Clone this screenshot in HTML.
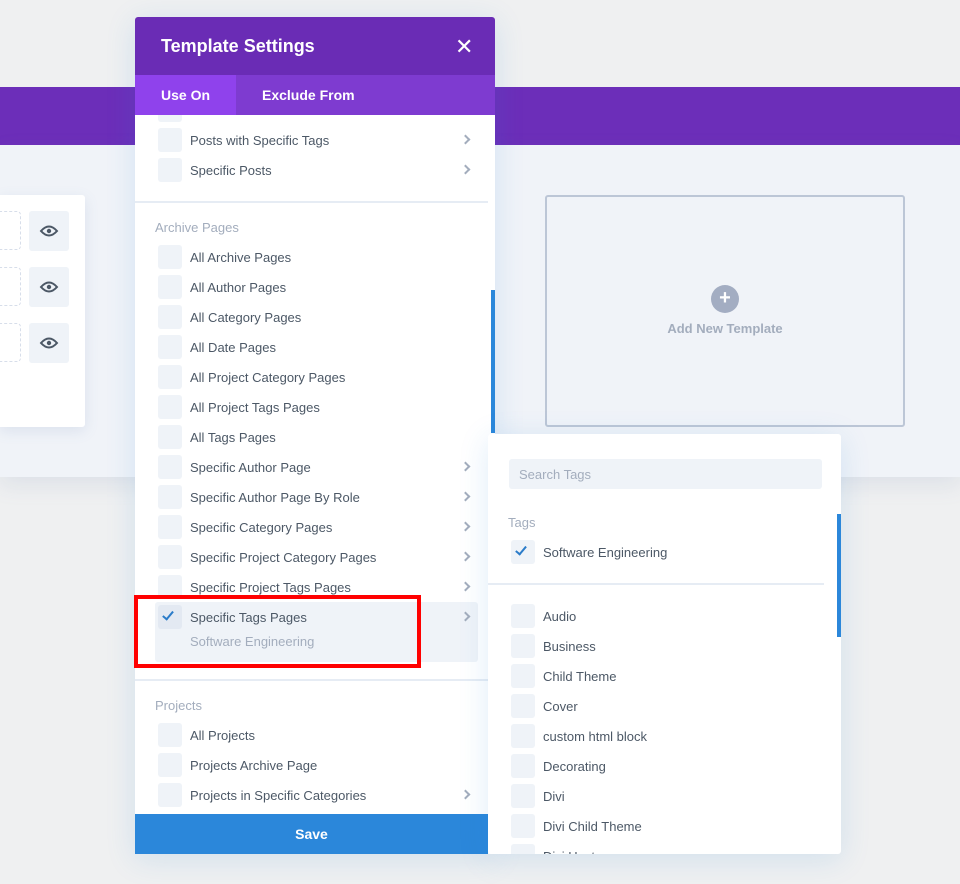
<!DOCTYPE html>
<html><head><meta charset="utf-8"><style>
*{margin:0;padding:0;box-sizing:border-box}
body{width:960px;height:884px;background:#eff0f1;font-family:"Liberation Sans",sans-serif;position:relative;overflow:hidden;color:#4c5866}
.a{position:absolute}
.cb{position:absolute;width:24px;height:24px;border-radius:3px;background:#eff3f8}
.t{position:absolute;font-size:13px;line-height:16px;white-space:nowrap;color:#4c5866;margin-top:1px}
.h{position:absolute;font-size:13px;line-height:16px;color:#a3adbd;margin-top:1px}
.ch{position:absolute;width:7px;height:7px;border-right:2px solid #a3adbd;border-top:2px solid #a3adbd;transform:rotate(45deg)}
.ck{position:absolute;width:6px;height:11px;border-right:2.5px solid #2b7cc9;border-bottom:2.5px solid #2b7cc9;transform:rotate(40deg)}
</style></head><body>
<div class="a" style="left:0;top:87px;width:960px;height:58px;background:#6c2eb9"></div>
<div class="a" style="left:0;top:145px;width:960px;height:332px;background:#f0f3f8;box-shadow:0 8px 20px rgba(120,140,180,.15)"></div>
<div class="a" style="left:0;top:195px;width:85px;height:232px;background:#fff;border-radius:0 3px 3px 0;box-shadow:0 4px 14px rgba(100,130,180,.15)"></div>
<div class="a" style="left:-10px;top:211px;width:31px;height:39px;border:1.5px dashed #d7deea;border-radius:4px"></div>
<div class="a" style="left:-10px;top:267px;width:31px;height:39px;border:1.5px dashed #d7deea;border-radius:4px"></div>
<div class="a" style="left:-10px;top:323px;width:31px;height:39px;border:1.5px dashed #d7deea;border-radius:4px"></div>
<svg class="a" style="left:29px;top:211px" width="40" height="152"><g fill="#eff3f8"><rect width="40" height="40" rx="3"/><rect y="56" width="40" height="40" rx="3"/><rect y="112" width="40" height="40" rx="3"/></g><g fill="none" stroke="#4c5866" stroke-width="2"><path d="M12 20q8-9 16 0q-8 9-16 0z"/><path d="M12 76q8-9 16 0q-8 9-16 0z"/><path d="M12 132q8-9 16 0q-8 9-16 0z"/></g><g fill="#4c5866"><circle cx="20" cy="20" r="2.2"/><circle cx="20" cy="76" r="2.2"/><circle cx="20" cy="132" r="2.2"/></g></svg>
<div class="a" style="left:545px;top:195px;width:360px;height:232px;border:2px solid #bcc6d6;border-radius:3px"></div>
<div class="a" style="left:711px;top:285px;width:28px;height:28px;border-radius:50%;background:#a3adc2;color:#fff;font-size:20px;line-height:27px;text-align:center;font-weight:bold">+</div>
<div class="a" style="left:545px;top:321px;width:360px;text-align:center;font-size:13px;font-weight:bold;color:#a3adbd">Add New Template</div>

<!-- modal -->
<div class="a" style="left:135px;top:17px;width:360px;height:837px;background:#fff;border-radius:3px;box-shadow:0 5px 30px rgba(43,135,218,.15)">
<div class="a" style="left:356px;top:273px;width:4px;height:143px;background:#2b87da"></div>
<div class="a" style="left:0;top:797px;width:353px;height:40px;background:#2b87da;color:#fff;font-weight:bold;font-size:14px;text-align:center;line-height:40px">Save</div>
</div>
<div class="cb" style="left:158px;top:98px"></div>
<div class="a" style="left:135px;top:17px;width:360px;height:98px;z-index:5;border-radius:3px 3px 0 0;overflow:hidden">
<div class="a" style="left:0;top:0;width:360px;height:58px;background:#6a2cb5"></div>
<div class="a" style="left:26px;top:19px;font-size:18px;font-weight:bold;color:#fff">Template Settings</div>
<div class="a" style="left:320px;top:22px;font-size:22px;line-height:16px;color:#fff">✕</div>
<div class="a" style="left:0;top:58px;width:360px;height:40px;background:#7e3bd0"></div>
<div class="a" style="left:0;top:58px;width:101px;height:40px;background:#8f42ec"></div>
<div class="a" style="left:26px;top:70px;font-size:14px;font-weight:bold;color:#fff">Use On</div>
<div class="a" style="left:127px;top:70px;font-size:14px;font-weight:bold;color:#fff">Exclude From</div>
</div>
<div class="cb" style="left:158px;top:128px"></div><div class="t" style="left:190px;top:132px">Posts with Specific Tags</div><div class="ch" style="left:462px;top:136px"></div>
<div class="cb" style="left:158px;top:158px"></div><div class="t" style="left:190px;top:162px">Specific Posts</div><div class="ch" style="left:462px;top:166px"></div>
<div class="a" style="left:135px;top:201px;width:353px;height:2px;background:#e6ecf4"></div>
<div class="h" style="left:155px;top:219px">Archive Pages</div>
<div class="cb" style="left:158px;top:245px"></div><div class="t" style="left:190px;top:249px">All Archive Pages</div>
<div class="cb" style="left:158px;top:275px"></div><div class="t" style="left:190px;top:279px">All Author Pages</div>
<div class="cb" style="left:158px;top:305px"></div><div class="t" style="left:190px;top:309px">All Category Pages</div>
<div class="cb" style="left:158px;top:335px"></div><div class="t" style="left:190px;top:339px">All Date Pages</div>
<div class="cb" style="left:158px;top:365px"></div><div class="t" style="left:190px;top:369px">All Project Category Pages</div>
<div class="cb" style="left:158px;top:395px"></div><div class="t" style="left:190px;top:399px">All Project Tags Pages</div>
<div class="cb" style="left:158px;top:425px"></div><div class="t" style="left:190px;top:429px">All Tags Pages</div>
<div class="cb" style="left:158px;top:455px"></div><div class="t" style="left:190px;top:459px">Specific Author Page</div><div class="ch" style="left:462px;top:463px"></div>
<div class="cb" style="left:158px;top:485px"></div><div class="t" style="left:190px;top:489px">Specific Author Page By Role</div><div class="ch" style="left:462px;top:493px"></div>
<div class="cb" style="left:158px;top:515px"></div><div class="t" style="left:190px;top:519px">Specific Category Pages</div><div class="ch" style="left:462px;top:523px"></div>
<div class="cb" style="left:158px;top:545px"></div><div class="t" style="left:190px;top:549px">Specific Project Category Pages</div><div class="ch" style="left:462px;top:553px"></div>
<div class="cb" style="left:158px;top:575px"></div><div class="t" style="left:190px;top:579px">Specific Project Tags Pages</div><div class="ch" style="left:462px;top:583px"></div>
<div class="a" style="left:155px;top:602px;width:323px;height:60px;background:#eff3f8;border-radius:3px"></div>
<div class="cb" style="left:158px;top:605px;background:#e3e9f2"></div><div class="ck" style="left:165px;top:609px"></div>
<div class="t" style="left:190px;top:609px">Specific Tags Pages</div><div class="ch" style="left:462px;top:613px"></div>
<div class="h" style="left:190px;top:633px">Software Engineering</div>
<div class="a" style="left:134px;top:595px;width:287px;height:73px;border:4px solid #f00"></div>
<div class="a" style="left:135px;top:679px;width:353px;height:2px;background:#e6ecf4"></div>
<div class="h" style="left:155px;top:697px">Projects</div>
<div class="cb" style="left:158px;top:723px"></div><div class="t" style="left:190px;top:727px">All Projects</div>
<div class="cb" style="left:158px;top:753px"></div><div class="t" style="left:190px;top:757px">Projects Archive Page</div>
<div class="cb" style="left:158px;top:783px"></div><div class="t" style="left:190px;top:787px">Projects in Specific Categories</div><div class="ch" style="left:462px;top:791px"></div>

<!-- popup -->
<div class="a" style="left:488px;top:434px;width:353px;height:420px;background:#fff;border-radius:3px;overflow:hidden;box-shadow:0 5px 30px rgba(43,135,218,.15)">
<div class="a" style="left:21px;top:25px;width:313px;height:30px;background:#eff3f8;border-radius:3px;font-size:13px;color:#a3adbd;padding:8px 10px">Search Tags</div>
<div class="h" style="left:20px;top:80px">Tags</div>
<div class="cb" style="left:23px;top:106px"></div><div class="ck" style="left:30px;top:110px"></div>
<div class="t" style="left:55px;top:110px">Software Engineering</div>
<div class="a" style="left:0;top:149px;width:336px;height:2px;background:#e6ecf4"></div>
<div class="a" style="left:349px;top:80px;width:4px;height:123px;background:#2b87da"></div>
<div class="cb" style="left:23px;top:170px"></div><div class="t" style="left:55px;top:174px">Audio</div>
<div class="cb" style="left:23px;top:200px"></div><div class="t" style="left:55px;top:204px">Business</div>
<div class="cb" style="left:23px;top:230px"></div><div class="t" style="left:55px;top:234px">Child Theme</div>
<div class="cb" style="left:23px;top:260px"></div><div class="t" style="left:55px;top:264px">Cover</div>
<div class="cb" style="left:23px;top:290px"></div><div class="t" style="left:55px;top:294px">custom html block</div>
<div class="cb" style="left:23px;top:320px"></div><div class="t" style="left:55px;top:324px">Decorating</div>
<div class="cb" style="left:23px;top:350px"></div><div class="t" style="left:55px;top:354px">Divi</div>
<div class="cb" style="left:23px;top:380px"></div><div class="t" style="left:55px;top:384px">Divi Child Theme</div>
<div class="cb" style="left:23px;top:410px"></div><div class="t" style="left:55px;top:414px">Divi Host</div>
</div>
</body></html>
